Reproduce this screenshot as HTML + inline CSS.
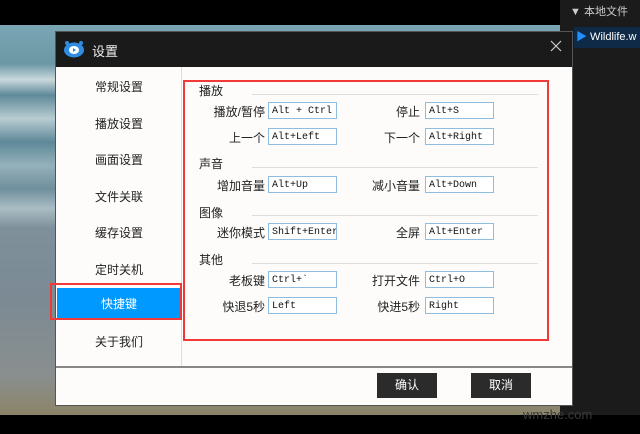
<!DOCTYPE html>
<html><head><meta charset="utf-8"><style>
*{margin:0;padding:0;box-sizing:border-box}
body{width:640px;height:434px;overflow:hidden;background:#000;position:relative;font-family:"Liberation Sans","Noto Sans CJK SC",sans-serif;font-size:12px;color:#222}
.bg{position:absolute;left:0;top:25px;width:560px;height:390px;background:linear-gradient(180deg,#7aa5b4 0%,#6c98a6 10%,#c9d8dc 14%,#5f8a99 18%,#b8ccd2 24%,#5e8898 30%,#95b1bb 36%,#6f8f9c 42%,#aabdc4 47%,#7e909a 52%,#7b8a94 70%,#8a8f8e 90%,#8b8468 100%)}
.rp{position:absolute;left:560px;top:0;width:80px;height:415px;background:#1b1b1b;color:#ccc;font-size:11px}
.dlg{position:absolute;left:55px;top:31px;width:518px;height:375px;background:#fdfcfb;border:1px solid #555}
.tb{position:absolute;left:0;top:0;width:100%;height:35px;background:#1a1a1a;color:#eee;font-size:13px}
.nav{position:absolute;left:0;top:35px;width:126px;height:300px;border-right:1px solid #ddd}
.nav div{position:absolute;left:0;width:126px;text-align:center;font-size:12px}
.foot{position:absolute;left:0;top:334px;width:100%;border-top:2px solid #888;height:40px}
.btn{position:absolute;top:341px;width:60px;height:25px;background:#2b2b2b;color:#fff;text-align:center;line-height:25px;font-size:12px}
.red{position:absolute;border:2px solid #f03a3a}
.sec{position:absolute;font-size:12px}
.line{position:absolute;height:1px;background:#ddd}
.lb{position:absolute;text-align:right;font-size:12px;width:90px}
.in{position:absolute;width:69px;height:17px;border:1px solid #8fbde0;background:#fff;font-family:"Liberation Mono",monospace;font-size:10px;line-height:15px;padding:1px 0 0 3px;white-space:nowrap;overflow:hidden;color:#111}
</style></head><body>
<div class="bg"></div>
<div class="rp">
<div style="position:absolute;left:10px;top:3px">▼ 本地文件</div>
<div style="position:absolute;left:14px;top:27px;width:66px;height:21px;background:#0e2a47;color:#fff;line-height:21px;padding-left:2px"><span style="color:#1e90ff">▶</span> Wildlife.w</div>
</div>
<div class="dlg">
<div class="tb">
<svg style="position:absolute;left:7px;top:8px" width="22" height="18" viewBox="0 0 22 18"><ellipse cx="11" cy="10" rx="10" ry="7.5" fill="#2f8de4"/><circle cx="4" cy="3" r="2" fill="#2f8de4"/><circle cx="18" cy="3" r="2" fill="#2f8de4"/><ellipse cx="11" cy="10" rx="5" ry="4" fill="#fff"/><path d="M10 8l3 2-3 2z" fill="#2f8de4"/></svg>
<span style="position:absolute;left:36px;top:9px">设置</span>
<svg style="position:absolute;left:494px;top:8px" width="12" height="12" viewBox="0 0 12 12"><path d="M1 1L11 11M11 1L1 11" stroke="#ccc" stroke-width="1.2"/></svg>
</div>
<div class="nav">
<div style="top:11px">常规设置</div>
<div style="top:48px">播放设置</div>
<div style="top:84px">画面设置</div>
<div style="top:121px">文件关联</div>
<div style="top:157px">缓存设置</div>
<div style="top:194px">定时关机</div>
<div style="top:221px;left:1px;width:124px;height:32px;background:#0099ff;color:#fff;line-height:32px">快捷键</div>
<div style="top:266px">关于我们</div>
</div>
<div class="foot"></div>
<div class="btn" style="left:321px">确认</div>
<div class="btn" style="left:415px">取消</div>
</div>
<div class="red" style="left:50px;top:283px;width:132px;height:37px"></div>
<div class="red" style="left:183px;top:80px;width:366px;height:261px"></div>

<div class="sec" style="left:199px;top:82px">播放</div><div class="line" style="left:252px;top:94px;width:286px"></div>
<div class="sec" style="left:199px;top:155px">声音</div><div class="line" style="left:252px;top:167px;width:286px"></div>
<div class="sec" style="left:199px;top:204px">图像</div><div class="line" style="left:252px;top:215px;width:286px"></div>
<div class="sec" style="left:199px;top:251px">其他</div><div class="line" style="left:252px;top:263px;width:286px"></div>

<div class="lb" style="left:175px;top:103px">播放/暂停</div><div class="in" style="left:268px;top:102px">Alt + Ctrl +</div>
<div class="lb" style="left:330px;top:103px">停止</div><div class="in" style="left:425px;top:102px">Alt+S</div>
<div class="lb" style="left:175px;top:129px">上一个</div><div class="in" style="left:268px;top:128px">Alt+Left</div>
<div class="lb" style="left:330px;top:129px">下一个</div><div class="in" style="left:425px;top:128px">Alt+Right</div>
<div class="lb" style="left:175px;top:177px">增加音量</div><div class="in" style="left:268px;top:176px">Alt+Up</div>
<div class="lb" style="left:330px;top:177px">减小音量</div><div class="in" style="left:425px;top:176px">Alt+Down</div>
<div class="lb" style="left:175px;top:224px">迷你模式</div><div class="in" style="left:268px;top:223px">Shift+Enter</div>
<div class="lb" style="left:330px;top:224px">全屏</div><div class="in" style="left:425px;top:223px">Alt+Enter</div>
<div class="lb" style="left:175px;top:272px">老板键</div><div class="in" style="left:268px;top:271px">Ctrl+`</div>
<div class="lb" style="left:330px;top:272px">打开文件</div><div class="in" style="left:425px;top:271px">Ctrl+O</div>
<div class="lb" style="left:175px;top:298px">快退5秒</div><div class="in" style="left:268px;top:297px">Left</div>
<div class="lb" style="left:330px;top:298px">快进5秒</div><div class="in" style="left:425px;top:297px">Right</div>
<div style="position:absolute;left:523px;top:407px;color:#3a3a3a;font-size:13px">wmzhe.com</div>
</body></html>
